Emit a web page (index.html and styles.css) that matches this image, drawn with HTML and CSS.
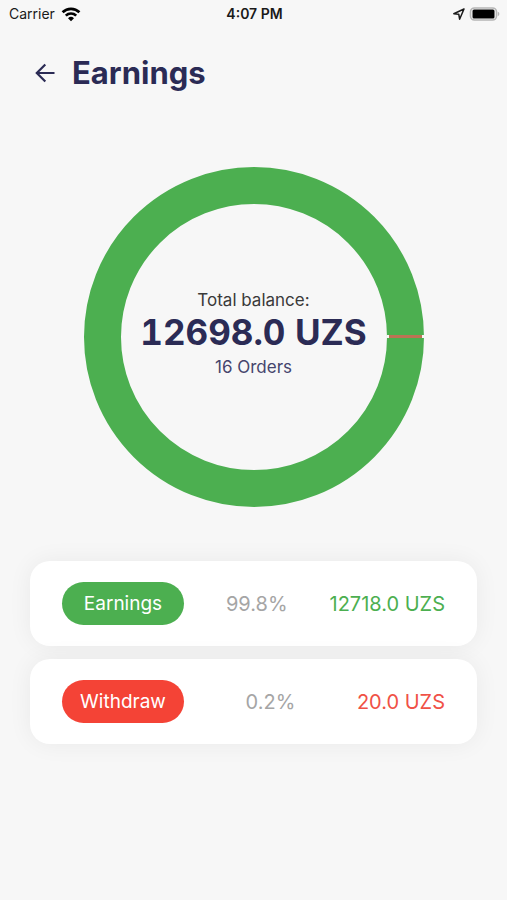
FILE: index.html
```html
<!DOCTYPE html>
<html lang="en">
<head>
<meta charset="utf-8">
<meta name="viewport" content="width=device-width, initial-scale=1">
<title>Earnings</title>
<link rel="stylesheet" href="styles.css">
</head>
<body>
<div class="status">
  <div class="status-left">
    <span>Carrier</span>
    <svg class="wifi" viewBox="0 0 20 16" aria-hidden="true">
      <g fill="none" stroke="currentColor" stroke-width="2.7">
        <path d="M1.6 6.3A12 12 0 0 1 18.4 6.3"/>
        <path d="M4.8 9.6A7.5 7.5 0 0 1 15.2 9.6"/>
      </g>
      <path d="M10 15.2 7 12.2a4.3 4.3 0 0 1 6 0z" fill="currentColor"/>
    </svg>
  </div>
  <time class="clock">4:07 PM</time>
  <div class="status-right">
    <svg class="location" viewBox="0 0 14 14" aria-hidden="true">
      <path d="M12 2 1.8 6.7 6.8 7.3 7.6 12.2z" fill="none" stroke="currentColor" stroke-width="1.5" stroke-linejoin="round"/>
    </svg>
    <svg class="battery" viewBox="0 0 31 14" aria-hidden="true">
      <rect x="1.5" y="1" width="26" height="12" rx="4" fill="#f7f7f7" stroke="#b5b5b5" stroke-width="1.6"/>
      <rect x="3.5" y="2.5" width="22" height="9" rx="1.5" fill="#000"/>
      <path d="M28.8 4.8q1.6.6 1.6 2.2t-1.6 2.2z" fill="#b5b5b5"/>
    </svg>
  </div>
</div>
<header class="header">
  <button class="back" type="button" aria-label="Back">
    <svg viewBox="0 0 20 20" aria-hidden="true">
      <path d="M19.5 10H2.5M10.3 1.5 1.8 10l8.5 8.5" fill="none" stroke="currentColor" stroke-width="2.2"/>
    </svg>
  </button>
  <h1>Earnings</h1>
</header>
<main>
  <section class="chart">
    <svg class="ring" viewBox="0 0 340 340" aria-hidden="true">
      <circle cx="170" cy="170" r="151.5" fill="none" stroke="#4caf50" stroke-width="37"/>
      <path d="M303 169.5h37" stroke="#f7f7f7" stroke-width="3"/>
      <path d="M305 169.5h33" stroke="#bd7354" stroke-width="3"/>
    </svg>
    <div class="summary">
      <span class="caption">Total balance:</span>
      <strong class="balance">12698.0 UZS</strong>
      <span class="orders">16 Orders</span>
    </div>
  </section>
  <ul class="cards">
    <li class="card">
      <span class="pill pill-in">Earnings</span>
      <span class="share">99.8%</span>
      <span class="amount-in">12718.0 UZS</span>
    </li>
    <li class="card">
      <span class="pill pill-out">Withdraw</span>
      <span class="share">0.2%</span>
      <span class="amount-out">20.0 UZS</span>
    </li>
  </ul>
</main>
</body>
</html>
```
FILE: styles.css
```css
* {
  box-sizing: border-box;
}

body {
  margin: 0;
  min-height: 100vh;
  background: #f7f7f7;
  color: #2b2b55;
  font-family: Inter, "Liberation Sans", sans-serif;
}

.status {
  display: grid;
  grid-template-columns: 1fr auto 1fr;
  align-items: center;
  height: 27px;
  padding: 0 7px 0 9px;
  color: #1a1a1a;
  font-size: 14px;
}

.status-left,
.status-right {
  display: flex;
  align-items: center;
  gap: 6px;
}

.status-right {
  justify-content: flex-end;
  gap: 3px;
}

.clock {
  font-weight: 600;
}

.wifi {
  width: 20px;
  height: 16px;
  color: #000;
}

.location {
  width: 14px;
  height: 14px;
}

.battery {
  width: 31px;
  height: 14px;
}

.header {
  display: flex;
  align-items: center;
  gap: 17px;
  padding: 26px 35px 0;
}

.back {
  display: flex;
  padding: 0;
  border: 0;
  background: none;
  color: inherit;
}

.back svg {
  width: 20px;
  height: 20px;
}

h1 {
  margin: 0;
  font-size: 31px;
  font-weight: 700;
  line-height: 40px;
}

.chart {
  display: grid;
  place-items: center;
  margin: 74px 30px 54px;
}

.ring,
.summary {
  grid-area: 1 / 1;
}

.ring {
  width: 100%;
  max-width: 340px;
}

.summary {
  display: flex;
  flex-direction: column;
  align-items: center;
  padding-bottom: 8px;
}

.caption,
.orders {
  font-size: 17px;
  line-height: 24px;
}

.caption {
  color: #3a3a3a;
}

.orders {
  color: #45456d;
}

.balance {
  margin-bottom: 3px;
  font-size: 35px;
  font-variant-numeric: tabular-nums;
  font-weight: 700;
  line-height: 40px;
}

.cards {
  display: grid;
  gap: 13px;
  margin: 0 30px;
  padding: 0;
  list-style: none;
}

.card {
  display: flex;
  align-items: center;
  justify-content: space-between;
  padding: 21px 32px;
  border-radius: 20px;
  background: #fff;
  box-shadow: 0 0 24px rgba(0, 0, 0, 0.06);
  font-size: 20px;
}

.pill {
  width: 122px;
  border-radius: 22px;
  color: #fff;
  font-size: 19px;
  line-height: 43px;
  text-align: center;
}

.pill-in {
  background: #4caf50;
}

.pill-out {
  background: #f44336;
}

.share {
  color: #a5a5a5;
}

.amount-in {
  color: #4caf50;
}

.amount-out {
  color: #f05146;
}
```
